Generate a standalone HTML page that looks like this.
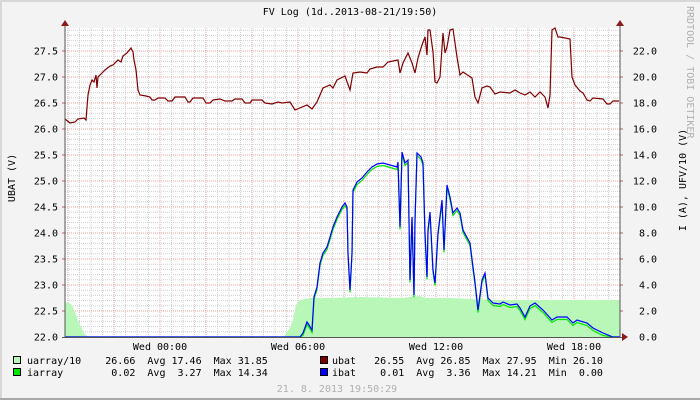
<!DOCTYPE html>
<html><head><meta charset="utf-8"><style>
html,body{margin:0;padding:0;background:#f3f3f3;}
svg{display:block;}
text{font-family:"DejaVu Sans Mono","Liberation Mono",monospace;font-size:10px;}
</style></head><body>
<svg id="s" width="700" height="400" xmlns="http://www.w3.org/2000/svg">
<rect x="0" y="0" width="700" height="400" fill="#f3f3f3"/>
<rect x="0" y="0" width="700" height="2" fill="#d8d8d8"/>
<rect x="0" y="0" width="2" height="400" fill="#d8d8d8"/>
<rect x="0" y="398" width="700" height="2" fill="#a8a8a8"/>
<rect x="65" y="28" width="555" height="309" fill="#ffffff"/>
<g id="grid"></g>
<polygon fill="#b8f7b8" points="65,337 65,303 68,302 72,305 76,315 80,325 84,333 88,337 285,337 285,335 290,328 293,320 296,305 300,300 310,298 330,298 360,297 400,298 420,296 425,298 450,298 470,299 500,300 560,300 620,300 620,337"/>
<g id="lines"></g>
<line x1="65" y1="24" x2="65" y2="338" stroke="#555" stroke-width="1"/>
<line x1="620" y1="24" x2="620" y2="338" stroke="#555" stroke-width="1"/>
<line x1="62" y1="337.5" x2="623" y2="337.5" stroke="#555" stroke-width="1"/>
<polygon points="61,26 69,26 65,20" fill="#8b1a1a"/>
<polygon points="616,26 624,26 620,20" fill="#8b1a1a"/>
<polygon points="622,333 622,341 628,337" fill="#8b1a1a"/>
<text x="350" y="15" text-anchor="middle">FV Log (1d..2013-08-21/19:50)</text>
<g id="lab" text-anchor="end"></g>
<text x="160" y="350" text-anchor="middle">Wed 00:00</text>
<text x="298" y="350" text-anchor="middle">Wed 06:00</text>
<text x="436" y="350" text-anchor="middle">Wed 12:00</text>
<text x="574" y="350" text-anchor="middle">Wed 18:00</text>
<text transform="translate(15,178) rotate(-90)" text-anchor="middle">UBAT (V)</text>
<text transform="translate(686,180) rotate(-90)" text-anchor="middle">I (A), UFV/10 (V)</text>
<text transform="translate(687,6) rotate(90)" fill="#b0b0b0">RRDTOOL / TOBI OETIKER</text>
<rect x="13.5" y="356.5" width="7" height="7" fill="#b8f7b8" stroke="#000"/>
<rect x="13.5" y="368.5" width="7" height="7" fill="#00e600" stroke="#000"/>
<rect x="320.5" y="356.5" width="7" height="7" fill="#7a0000" stroke="#000"/>
<rect x="320.5" y="368.5" width="7" height="7" fill="#0000ff" stroke="#000"/>
<text x="27" y="364" xml:space="preserve">uarray/10    26.66  Avg 17.46  Max 31.85</text>
<text x="27" y="376" xml:space="preserve">iarray        0.02  Avg  3.27  Max 14.34</text>
<text x="332" y="364" xml:space="preserve">ubat   26.55  Avg 26.85  Max 27.95  Min 26.10</text>
<text x="332" y="376" xml:space="preserve">ibat    0.01  Avg  3.36  Max 14.21  Min  0.00</text>
<text x="337" y="392" text-anchor="middle" fill="#b0b0b0" xml:space="preserve">21. 8. 2013 19:50:29</text>
</svg>
<script>
var NS="http://www.w3.org/2000/svg";
function el(p,n,a,t){var e=document.createElementNS(NS,n);for(var k in a)e.setAttribute(k,a[k]);if(t)e.textContent=t;p.appendChild(e);return e;}
var g=document.getElementById('grid');
for(var k=-8;k<=39;k++){var x=160+11.5*k;if(x<66||x>619)continue;var maj=(k%4===0);
el(g,'line',{x1:x,y1:28,x2:x,y2:337,stroke:maj?'#e8a0a0':'#cfcfcf','stroke-width':1,'stroke-dasharray':'1,1'});}
for(var i=1;i<=59;i++){var y=337-5.2*i;if(y<28)break;var maj=(i%5===0);
el(g,'line',{x1:65,y1:y,x2:620,y2:y,stroke:maj?'#e8a0a0':'#cfcfcf','stroke-width':1,'stroke-dasharray':'1,1'});
if(maj){el(g,'line',{x1:62,y1:y,x2:65,y2:y,stroke:'#c06060'});el(g,'line',{x1:620,y1:y,x2:623,y2:y,stroke:'#c06060'});}}
var lab=document.getElementById('lab');
for(var i=0;i<=11;i++){var y=337-26*i+3.5;el(lab,'text',{x:58,y:y},(22+0.5*i).toFixed(1));el(lab,'text',{x:657,y:y},(2*i).toFixed(1));}
var L=document.getElementById('lines');
var blue="65,337 300,337 303,333 307,322 309,325 312,330 314,297 317,287 320,263 323,253 327,247 333,227 337,217 342,207 345,203 347,207 348,253 350,290 352,253 353,190 357,182 362,178 367,172 372,167 377,164 383,163 390,165 397,167 398,162 400,227 402,152 405,163 408,160 410,280 412,217 414,295 415,220 417,153 421,157 423,163 425,233 427,277 428,230 430,212 433,270 435,283 438,233 442,200 444,250 447,185 450,197 453,213 457,208 460,213 463,230 470,243 473,267 475,282 478,310 482,280 485,273 488,298 493,303 500,304 503,302 510,305 517,304 520,308 525,317 530,306 535,303 543,310 552,320 557,317 567,317 573,323 577,320 587,323 593,328 603,333 613,337 620,337";
var green=blue.split(' ').map(function(p){var a=p.split(',');var y=+a[1];if(y<336)y=Math.min(337,y+2.5);return a[0]+','+y;}).join(' ');
el(L,'polyline',{points:green,fill:'none',stroke:'#00e600','stroke-width':1.2});
el(L,'polyline',{points:blue,fill:'none',stroke:'#0000ff','stroke-width':1.2});
var ubat="65,119 70,123 75,122 78,119 84,118 86,120 88,95 90,85 92,80 94,82 96,75 97,88 98,77 102,73 105,70 110,66 113,65 118,60 121,62 123,56 127,53 131,48 133,52 134,60 136,70 138,90 140,95 146,96 150,97 152,100 155,100 158,98 165,98 168,101 172,101 175,97 185,97 188,102 190,102 193,98 203,98 206,103 210,103 213,100 220,99 225,101 232,101 235,99 242,99 245,103 250,103 252,100 262,100 265,103 272,104 278,102 282,103 290,102 295,110 307,105 312,109 317,102 323,88 330,85 333,88 337,80 345,76 350,90 353,73 360,72 367,73 370,69 377,67 383,67 388,62 398,60 400,73 403,63 408,53 412,63 415,73 418,58 422,45 425,37 427,55 428,30 430,30 433,52 435,82 437,83 440,77 443,33 445,53 447,47 450,30 453,29 457,57 460,75 463,72 472,78 475,97 478,103 482,88 487,86 490,87 495,94 500,92 510,93 515,90 520,93 525,95 530,92 535,97 540,92 545,97 548,108 550,95 552,30 555,28 558,37 560,37 570,39 572,77 575,85 580,91 583,93 587,100 590,101 593,98 603,99 607,104 610,104 613,101 619,101";
el(L,'polyline',{points:ubat,fill:'none',stroke:'#800000','stroke-width':1.2});
</script>
</body></html>
